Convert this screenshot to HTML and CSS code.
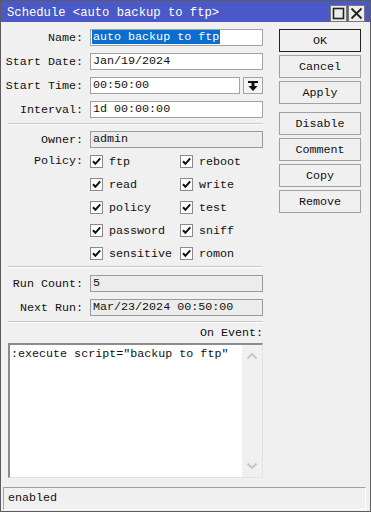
FILE: index.html
```html
<!DOCTYPE html>
<html>
<head>
    <title>Schedule</title>
    <link rel="stylesheet" href="styles.css">
</head>
<body>
    <div class="window">
        <div class="titlebar">
            <span class="title">Schedule &lt;auto backup to ftp&gt;</span>
            <div class="title-buttons">
                <span class="tbtn">
                    <svg width="15" height="15" viewBox="0 0 15 15"><rect x="2.5" y="2.5" width="10" height="10" fill="none" stroke="#222" stroke-width="1.6"/></svg>
                </span>
                <span class="tbtn">
                    <svg width="15" height="15" viewBox="0 0 15 15"><path d="M2.5 2.5 L12.5 12.5 M12.5 2.5 L2.5 12.5" stroke="#222" stroke-width="1.8"/></svg>
                </span>
            </div>
        </div>

        <div class="main">
            <div class="form">
                <div class="row">
                    <label>Name:</label>
                    <div class="field"><span class="selected">auto backup to ftp</span></div>
                </div>
                <div class="row">
                    <label>Start Date:</label>
                    <div class="field">Jan/19/2024</div>
                </div>
                <div class="row">
                    <label>Start Time:</label>
                    <div class="field short">00:50:00</div>
                    <div class="drop">
                        <svg width="12" height="12" viewBox="0 0 12 12"><rect x="1" y="1" width="10" height="2" fill="#111"/><rect x="4.5" y="3" width="3" height="3" fill="#111"/><path d="M1.5 6 L10.5 6 L6 11 Z" fill="#111"/></svg>
                    </div>
                </div>
                <div class="row">
                    <label>Interval:</label>
                    <div class="field">1d 00:00:00</div>
                </div>

                <div class="sep"></div>

                <div class="row">
                    <label>Owner:</label>
                    <div class="field readonly">admin</div>
                </div>
                <div class="policy">
                    <label class="plabel">Policy:</label>
                    <div class="checks">
                        <div class="check"><span class="box"></span>ftp</div>
                        <div class="check"><span class="box"></span>reboot</div>
                        <div class="check"><span class="box"></span>read</div>
                        <div class="check"><span class="box"></span>write</div>
                        <div class="check"><span class="box"></span>policy</div>
                        <div class="check"><span class="box"></span>test</div>
                        <div class="check"><span class="box"></span>password</div>
                        <div class="check"><span class="box"></span>sniff</div>
                        <div class="check"><span class="box"></span>sensitive</div>
                        <div class="check"><span class="box"></span>romon</div>
                    </div>
                </div>

                <div class="sep sep2"></div>

                <div class="row">
                    <label>Run Count:</label>
                    <div class="field readonly">5</div>
                </div>
                <div class="row">
                    <label>Next Run:</label>
                    <div class="field readonly">Mar/23/2024 00:50:00</div>
                </div>

                <div class="sep sep3"></div>

                <div class="event-label">On Event:</div>
                <div class="script">
                    <div class="script-text">:execute script="backup to ftp"</div>
                    <div class="scroll">
                        <svg width="12" height="8" viewBox="0 0 12 8"><polyline points="1.5,6.5 6,2 10.5,6.5" fill="none" stroke="#c4c4c4" stroke-width="1.8"/></svg>
                        <svg width="12" height="8" viewBox="0 0 12 8"><polyline points="1.5,1.5 6,6 10.5,1.5" fill="none" stroke="#c4c4c4" stroke-width="1.8"/></svg>
                    </div>
                </div>
            </div>

            <div class="buttons">
                <div class="btn default">OK</div>
                <div class="btn">Cancel</div>
                <div class="btn">Apply</div>
                <div class="btn gap">Disable</div>
                <div class="btn">Comment</div>
                <div class="btn">Copy</div>
                <div class="btn">Remove</div>
            </div>
        </div>

        <div class="status">enabled</div>
    </div>
</body>
</html>
```

FILE: styles.css
```css
body {
    margin: 0;
    font-family: "Liberation Mono", monospace;
    font-size: 11.7px;
    color: #111;
}
.window {
    width: 371px;
    height: 512px;
    box-sizing: border-box;
    border: 1px solid #5c5c5c;
    background: #f0f0f0;
    display: flex;
    flex-direction: column;
}

/* title bar */
.titlebar {
    height: 21px;
    background: #4b59c8;
    color: #fff;
    display: flex;
    align-items: center;
    justify-content: space-between;
    padding-left: 6px;
    flex-shrink: 0;
}
.title { font-size: 12.2px; padding-top: 3px; }
.title-buttons {
    display: flex;
    gap: 1px;
    margin-right: 5px;
    margin-top: 4px;
}
.tbtn {
    width: 17px;
    height: 17px;
    box-sizing: border-box;
    background: #ececec;
    border: 1px solid #7a7a7a;
    display: flex;
    align-items: center;
    justify-content: center;
}

/* main area */
.main {
    display: flex;
    padding-top: 7px;
    flex: 1;
}
.form {
    width: 262px;
    display: flex;
    flex-direction: column;
}
.row {
    display: flex;
    align-items: center;
    height: 17px;
    margin-bottom: 7px;
}
.row label, .plabel {
    width: 82px;
    text-align: right;
    margin-right: 7px;
    flex-shrink: 0;
}
.field {
    width: 173px;
    height: 17px;
    box-sizing: border-box;
    border: 1px solid #a3a3a3;
    background: #fff;
    padding: 0 2px;
    line-height: 15px;
    white-space: nowrap;
    overflow: hidden;
}
.field.short { width: 150px; }
.field.readonly { background: #ececec; border-color: #9a9a9a; }
.selected {
    background: #0a6ed1;
    color: #fff;
    display: inline-block;
    line-height: 14px;
    margin-left: -1px;
    padding: 0 1px;
}
.drop {
    width: 20px;
    height: 17px;
    box-sizing: border-box;
    margin-left: 3px;
    border: 1px solid #a3a3a3;
    background: #f4f4f4;
    display: flex;
    align-items: center;
    justify-content: center;
}

.sep {
    height: 0;
    border-top: 1px solid #c8c8c8;
    border-bottom: 1px solid #fff;
    margin: -2px 0 6px 7px;
}
.sep2 { margin: 1px 0 7px 7px; }
.sep3 { margin: -2px 0 3px 7px; }

/* policy checkboxes */
.policy {
    display: flex;
    margin-top: -5px;
}
.plabel {
    line-height: 23px;
}
.checks {
    display: grid;
    grid-template-columns: 90px 90px;
}
.check {
    height: 23px;
    display: flex;
    align-items: center;
}
.box {
    width: 13px;
    height: 13px;
    box-sizing: border-box;
    border: 1px solid #8a8a8a;
    background: #fff url("data:image/svg+xml,%3Csvg xmlns='http://www.w3.org/2000/svg' width='11' height='11'%3E%3Cpath d='M2 5.2 L4.4 7.8 L9.2 2.4' fill='none' stroke='%23111' stroke-width='2'/%3E%3C/svg%3E") no-repeat center;
    margin-right: 6px;
}

/* on event */
.event-label {
    text-align: right;
    line-height: 14px;
    margin-bottom: 3px;
}
.script {
    margin-left: 7px;
    width: 255px;
    height: 135px;
    box-sizing: border-box;
    border-top: 2px solid #8c8c8c;
    border-left: 2px solid #8c8c8c;
    border-right: 1px solid #e2e2e2;
    border-bottom: 1px solid #e2e2e2;
    background: #fff;
    display: flex;
}
.script-text {
    flex: 1;
    padding: 2px 0 0 1px;
    line-height: 14px;
}
.scroll {
    width: 20px;
    background: #f0f0f0;
    display: flex;
    flex-direction: column;
    justify-content: space-between;
    align-items: center;
    padding: 7px 0 7px;
}

/* right buttons */
.buttons {
    margin-left: 16px;
    width: 82px;
    display: flex;
    flex-direction: column;
    gap: 3px;
}
.btn {
    height: 23px;
    box-sizing: border-box;
    border: 1px solid #a0a0a0;
    background: #f0f0f0;
    display: flex;
    align-items: center;
    justify-content: center;
}
.btn.default { border-color: #222; }
.btn.gap { margin-top: 5px; }

/* status bar */
.status {
    height: 23px;
    box-sizing: border-box;
    margin: 7px 4px 1px 2px;
    border-top: 1px solid #a0a0a0;
    border-left: 1px solid #a0a0a0;
    border-right: 1px solid #fff;
    border-bottom: 1px solid #fff;
    padding-left: 4px;
    line-height: 21px;
    flex-shrink: 0;
}
```
